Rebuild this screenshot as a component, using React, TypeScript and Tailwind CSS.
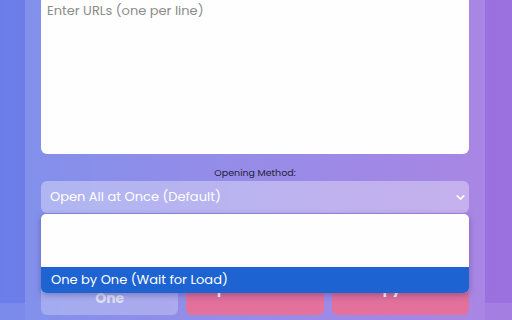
import { ChevronDown } from 'lucide-react'

const font = "'Poppins','Inter','Noto Sans',sans-serif"

function SideStrip() {
  return (
    <div className="flex h-full flex-col">
      <div className="flex-1" />
      <div className="h-[17px] bg-white/10" />
    </div>
  )
}

export default function App() {
  return (
    <div
      className="grid h-[320px] w-[512px] grid-cols-[25px_460px_27px] overflow-hidden bg-gradient-to-r from-[#6a7ee9] to-[#9c70df]"
      style={{ fontFamily: font }}
    >
      <SideStrip />

      <div className="relative flex h-full flex-col bg-white/15 px-4">
        <textarea
          placeholder="Enter URLs (one per line)"
          className="h-[154px] w-full resize-none rounded-b-[6px] bg-[#fdfefd] pl-[6px] pt-[1px] text-[13px] leading-[20px] text-gray-700 outline-none placeholder:text-[#8c8c8c]"
        />

        <div className="mt-[12px] text-center text-[9.5px] leading-[14px] text-[#23233a]">
          Opening Method:
        </div>

        <div className="relative mt-[1px]">
          <div className="flex h-[32px] items-center justify-between rounded-[6px] bg-white/35 pl-[9px] pr-[2px] text-[13px] text-white">
            <span>Open All at Once (Default)</span>
            <ChevronDown size={13} strokeWidth={3} className="text-white" />
          </div>

          <div className="absolute left-0 right-0 top-[33px] z-10 overflow-hidden rounded-[5px] bg-[#fdfefd] shadow-[0_2px_6px_rgba(40,30,90,0.35)]">
            <div className="h-[53px]" />
            <div className="flex h-[26px] items-center bg-[#1e63d2] pl-[10px] text-[13px] text-white">
              One by One (Wait for Load)
            </div>
          </div>

          <div className="mt-[45px] grid h-[57px] grid-cols-3 gap-2">
            <button className="flex flex-col items-center justify-center rounded-[6px] bg-white/25 pt-[4px] text-[14px] font-bold leading-[18px] text-[#dfe0f3]">
              <span>Open One by</span>
              <span>One</span>
            </button>
            <button className="flex items-center justify-center rounded-[6px] bg-gradient-to-b from-[#d6689e] to-[#e4729a] pt-[4px] text-[14px] font-bold text-white">
              Open All Tabs
            </button>
            <button className="flex items-center justify-center rounded-[6px] bg-gradient-to-b from-[#d6689e] to-[#e4729a] pt-[4px] text-[14px] font-bold text-white">
              Copy URLs
            </button>
          </div>
        </div>
      </div>

      <SideStrip />
    </div>
  )
}
